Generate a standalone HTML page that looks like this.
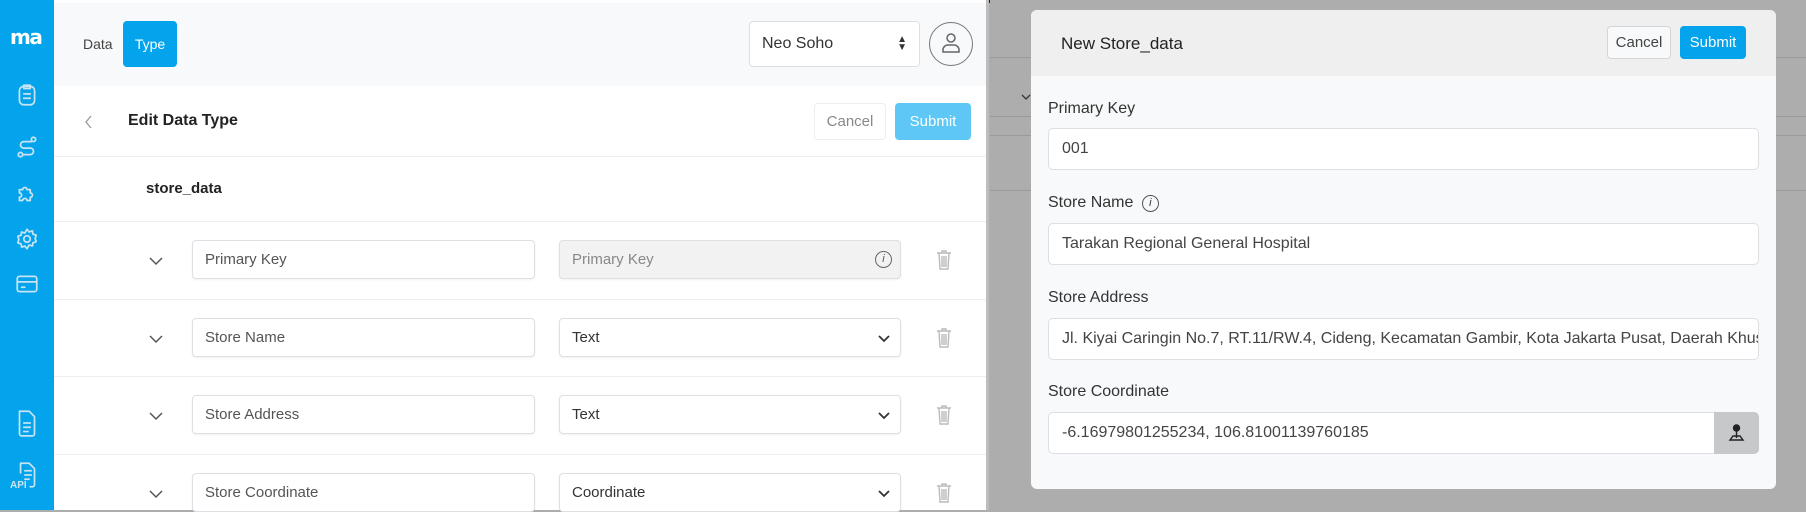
<!DOCTYPE html>
<html><head><style>
*{box-sizing:border-box;margin:0;padding:0}
body{width:1806px;height:510px;overflow:hidden;font-family:"Liberation Sans",sans-serif;background:#adadad;position:relative}
.a{position:absolute}
.sb{left:0;top:0;width:54px;height:510px;background:#03a4ec}
.ic{position:absolute;left:14px;width:26px;height:26px;fill:none;stroke:#c9e3f3;stroke-width:1.6;stroke-linecap:round;stroke-linejoin:round}
.main{left:54px;top:0;width:932px;height:510px;background:#fff}
.inp{position:absolute;height:39px;border:1px solid #dcdfe3;border-radius:4px;background:#fff;font-size:15px;color:#555;padding:0 12px;line-height:37px;box-shadow:0 1px 2px rgba(0,0,0,.06)}
.hl{position:absolute;left:0;width:932px;height:1px;background:#eceef0}
.chev{position:absolute;left:95px;width:14px;height:10px;fill:none;stroke:#555;stroke-width:1.5}
.tr{position:absolute;left:881px;width:18px;height:22px;fill:none;stroke:#bbb;stroke-width:1.4}
.modal{left:1031px;top:10px;width:745px;height:479px;background:#f8f9fa;border-radius:6px;overflow:hidden}
.lbl{position:absolute;left:17px;font-size:16px;color:#333}
.mi{position:absolute;left:17px;width:711px;height:42px;border:1px solid #dcdfe3;border-radius:5px;background:#fff;font-size:16px;color:#444;padding:0 13px;line-height:40px;white-space:nowrap;overflow:hidden}
</style></head><body>
<div class="a" style="left:0;top:0;width:990px;height:3px;background:#222"></div>
<div class="a sb">
<div class="a" style="left:10px;top:25px;color:#fff;font-weight:bold;font-size:20px;letter-spacing:-1.5px;font-family:'DejaVu Sans',sans-serif">ma</div>
<svg class="ic" style="top:82px" viewBox="0 0 24 24"><rect x="5" y="4" width="14" height="17" rx="4"/><path d="M9 3h6v3H9zM9 11h6M9 15h6"/></svg>
<svg class="ic" style="top:134px" viewBox="0 0 24 24"><circle cx="6" cy="19" r="2"/><circle cx="18" cy="5" r="2"/><path d="M8 19h7a3 3 0 0 0 0-6H9a3 3 0 0 1 0-6h7"/></svg>
<svg class="ic" style="top:181px" viewBox="0 0 24 24"><path d="M5 8h3a2 2 0 1 1 4 0h3v3a2 2 0 1 1 0 4v3h-3a2 2 0 1 0-4 0H5v-3a2 2 0 1 0 0-4z"/></svg>
<svg class="ic" style="top:226px" viewBox="0 0 24 24"><circle cx="12" cy="12" r="3"/><path d="M12 3l2 2.5 3-1 .5 3 3 1-1 3 1 3-3 1-.5 3-3-1L12 21l-2-2.5-3 1-.5-3-3-1 1-3-1-3 3-1 .5-3 3 1z"/></svg>
<svg class="ic" style="top:271px" viewBox="0 0 24 24"><rect x="3" y="5" width="18" height="14" rx="2"/><path d="M3 10h18M7 15h3"/></svg>
<svg class="ic" style="top:408px;height:30px" viewBox="0 0 24 28"><path d="M5 3h9l5 5v16a2 2 0 0 1-2 2H7a2 2 0 0 1-2-2z"/><path d="M9 14h6M9 18h6M9 22h4"/></svg>
<svg class="ic" style="top:460px;height:30px" viewBox="0 0 24 28"><path d="M6 12V3h8l5 5v15a2 2 0 0 1-2 2h-2"/><path d="M10 10h6M10 14h6M10 18h4"/></svg>
<div class="a" style="left:10px;top:480px;color:#c9e3f3;font-size:10px;font-weight:bold">API</div>
</div>
<div class="a main">
<div class="a" style="left:0;top:3px;width:932px;height:83px;background:#f8f9fa"></div>
<div class="a" style="left:29px;top:36px;font-size:14px;color:#444">Data</div>
<div class="a" style="left:69px;top:21px;width:54px;height:46px;background:#03a4ec;border-radius:4px;color:#fff;font-size:14px;line-height:46px;text-align:center">Type</div>
<div class="a" style="left:695px;top:21px;width:171px;height:46px;border:1px solid #dcdfe3;border-radius:4px;background:#fff;font-size:16px;color:#333;line-height:44px;padding-left:12px">Neo Soho<span style="position:absolute;right:12px;top:0;font-size:10px;line-height:8px;padding-top:14px">▲<br>▼</span></div>
<div class="a" style="left:875px;top:22px;width:44px;height:44px;border:1.5px solid #777;border-radius:50%"><svg width="44" height="44" viewBox="0 0 44 44" style="position:absolute;left:-1px;top:-1px" fill="none" stroke="#666" stroke-width="1.5"><circle cx="22" cy="16" r="4"/><path d="M14 30v-2a5 5 0 0 1 5-5h6a5 5 0 0 1 5 5v2z"/></svg></div>
<svg class="a" style="left:30px;top:114px" width="10" height="16" fill="none" stroke="#999" stroke-width="1.3"><path d="M7 2L2 8l5 6"/></svg>
<div class="a" style="left:74px;top:112px;font-size:16px;font-weight:bold;color:#222">Edit Data Type</div>
<div class="a" style="left:760px;top:103px;width:72px;height:37px;border:1px solid #eee;border-radius:4px;font-size:15px;color:#888;text-align:center;line-height:35px">Cancel</div>
<div class="a" style="left:841px;top:103px;width:76px;height:37px;background:#5ec7f6;border-radius:4px;font-size:15px;color:#fff;text-align:center;line-height:37px">Submit</div>
<div class="hl" style="top:156px"></div>
<div class="a" style="left:92px;top:180px;font-size:15px;font-weight:bold;color:#222">store_data</div>
<div class="hl" style="top:221px"></div>
<div class="hl" style="top:299px"></div>
<div class="hl" style="top:376px"></div>
<div class="hl" style="top:454px"></div>
<svg class="chev" style="top:256px" viewBox="0 0 14 10"><path d="M1 2l6 6 6-6"/></svg>
<svg class="chev" style="top:334px" viewBox="0 0 14 10"><path d="M1 2l6 6 6-6"/></svg>
<svg class="chev" style="top:411px" viewBox="0 0 14 10"><path d="M1 2l6 6 6-6"/></svg>
<svg class="chev" style="top:489px" viewBox="0 0 14 10"><path d="M1 2l6 6 6-6"/></svg>
<div class="inp" style="left:138px;top:240px;width:343px">Primary Key</div>
<div class="inp" style="left:505px;top:240px;width:342px;background:#f2f2f2;color:#888">Primary Key<span style="position:absolute;right:8px;top:10px;width:17px;height:17px;border:1.3px solid #666;border-radius:50%;font-size:11px;line-height:15px;text-align:center;color:#555;font-style:italic">i</span></div>
<div class="inp" style="left:138px;top:318px;width:343px">Store Name</div>
<div class="inp" style="left:505px;top:318px;width:342px;color:#333">Text</div>
<div class="inp" style="left:138px;top:395px;width:343px">Store Address</div>
<div class="inp" style="left:505px;top:395px;width:342px;color:#333">Text</div>
<div class="inp" style="left:138px;top:473px;width:343px">Store Coordinate</div>
<div class="inp" style="left:505px;top:473px;width:342px;color:#333">Coordinate</div>
<svg class="a" style="left:823px;top:334px" width="14" height="10" fill="none" stroke="#333" stroke-width="1.8"><path d="M2 2l5 5 5-5"/></svg>
<svg class="a" style="left:823px;top:411px" width="14" height="10" fill="none" stroke="#333" stroke-width="1.8"><path d="M2 2l5 5 5-5"/></svg>
<svg class="a" style="left:823px;top:489px" width="14" height="10" fill="none" stroke="#333" stroke-width="1.8"><path d="M2 2l5 5 5-5"/></svg>
<svg class="tr" style="top:249px" viewBox="0 0 18 22"><path d="M2 4h14M7 4V2h4v2M4 4l1 16h8l1-16M7 7v11M9 7v11M11 7v11"/></svg>
<svg class="tr" style="top:327px" viewBox="0 0 18 22"><path d="M2 4h14M7 4V2h4v2M4 4l1 16h8l1-16M7 7v11M9 7v11M11 7v11"/></svg>
<svg class="tr" style="top:404px" viewBox="0 0 18 22"><path d="M2 4h14M7 4V2h4v2M4 4l1 16h8l1-16M7 7v11M9 7v11M11 7v11"/></svg>
<svg class="tr" style="top:482px" viewBox="0 0 18 22"><path d="M2 4h14M7 4V2h4v2M4 4l1 16h8l1-16M7 7v11M9 7v11M11 7v11"/></svg>
</div>
<div class="a" style="left:986px;top:0;width:3px;height:510px;background:#bdbdbd"></div>
<div class="a" style="left:990px;top:57px;width:816px;height:1px;background:#9a9a9a"></div>
<div class="a" style="left:990px;top:116px;width:816px;height:1px;background:#9a9a9a"></div>
<div class="a" style="left:990px;top:135px;width:816px;height:1px;background:#9a9a9a"></div>
<div class="a" style="left:990px;top:190px;width:816px;height:1px;background:#9a9a9a"></div>
<svg class="a" style="left:1021px;top:93px" width="10" height="8" fill="none" stroke="#333" stroke-width="1.3"><path d="M1 2l4 4 4-4"/></svg>
<div class="a modal">
<div class="a" style="left:0;top:0;width:745px;height:66px;background:#efefef"></div>
<div class="a" style="left:30px;top:24px;font-size:17px;color:#222">New Store_data</div>
<div class="a" style="left:576px;top:16px;width:64px;height:33px;border:1px solid #d5d5d5;border-radius:4px;background:#f8f9fa;font-size:15px;color:#444;text-align:center;line-height:31px">Cancel</div>
<div class="a" style="left:649px;top:16px;width:66px;height:33px;background:#03a4ec;border-radius:4px;font-size:15px;color:#fff;text-align:center;line-height:33px">Submit</div>
<div class="lbl" style="top:90px">Primary Key</div>
<div class="mi" style="top:118px">001</div>
<div class="lbl" style="top:184px">Store Name <span style="display:inline-block;width:17px;height:17px;border:1.2px solid #555;border-radius:50%;font-size:11px;line-height:15px;text-align:center;font-style:italic;vertical-align:1px;margin-left:4px">i</span></div>
<div class="mi" style="top:213px">Tarakan Regional General Hospital</div>
<div class="lbl" style="top:279px">Store Address</div>
<div class="mi" style="top:308px">Jl. Kiyai Caringin No.7, RT.11/RW.4, Cideng, Kecamatan Gambir, Kota Jakarta Pusat, Daerah Khusus Ibukota Jakarta</div>
<div class="lbl" style="top:373px">Store Coordinate</div>
<div class="mi" style="top:402px">-6.16979801255234, 106.81001139760185</div>
<div class="a" style="left:683px;top:402px;width:45px;height:42px;background:#c6c8ca;border-radius:0 5px 5px 0"><svg width="45" height="42" viewBox="0 0 45 42" fill="none" stroke="#222" stroke-width="1.4"><circle cx="22.5" cy="16" r="3" fill="#222"/><path d="M22.5 19v7M16 28l3-4h7l3 4z"/></svg></div>
</div>
</body></html>
